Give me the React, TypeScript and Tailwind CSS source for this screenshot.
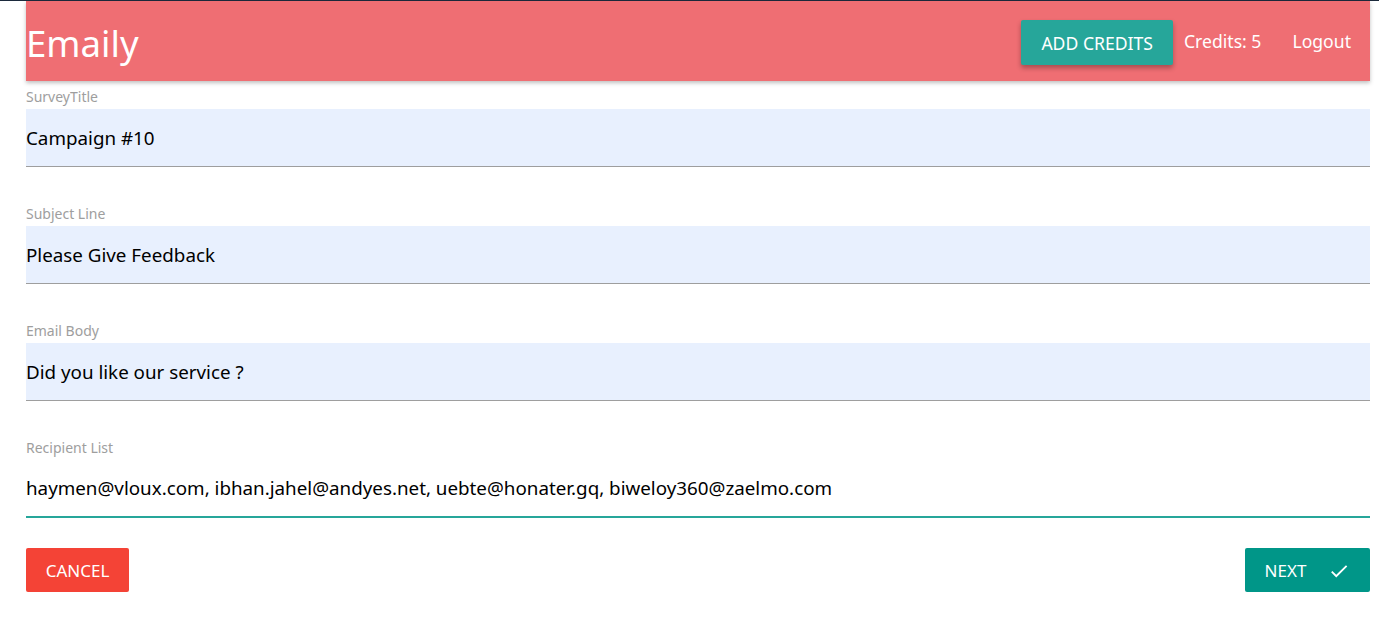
import React, { useState } from 'react';
import { MdDone } from 'react-icons/md';

// Campos do formulário de pesquisa
const fields = [
  { name: 'title', label: 'SurveyTitle', value: 'Campaign #10' },
  { name: 'subject', label: 'Subject Line', value: 'Please Give Feedback' },
  { name: 'body', label: 'Email Body', value: 'Did you like our service ?' },
];

export default function App() {
  const [recipients, setRecipients] = useState(
    'haymen@vloux.com, ibhan.jahel@andyes.net, uebte@honater.gq, biweloy360@zaelmo.com'
  );

  return (
    <div className="min-h-[629px] bg-white" style={{ fontFamily: '"Noto Sans", "Open Sans", sans-serif' }}>
      <div className="h-px bg-[#1c2a3c]" />
      <div className="ml-[26px] w-[1344px]">
        {/* Navbar */}
        <nav className="flex h-[80px] items-center justify-between bg-[#ef6e73] shadow-[0_2px_4px_rgba(0,0,0,0.25)]">
          <a className="mt-[4px] text-[36.6px] leading-none text-white" href="#">
            Emaily
          </a>
          <ul className="flex items-center">
            <li>
              <button className="mt-[3px] h-[45px] rounded-[2px] bg-[#26a69a] px-[20px] pt-[2px] text-[17.6px] text-white shadow-[0_3px_5px_rgba(0,0,0,0.3)]">
                ADD CREDITS
              </button>
            </li>
            <li className="ml-[11px] mt-[1px] text-[17.6px] text-white">Credits: 5</li>
            <li className="ml-[31px] mr-[19px] mt-[1px] text-[17.6px] text-white">Logout</li>
          </ul>
        </nav>

        {/* Formulário */}
        <form className="pt-[6px]" onSubmit={(e) => e.preventDefault()}>
          {fields.map((f) => (
            <div key={f.name} className="mb-[37px]">
              <label className="mb-[3px] block text-[14px] leading-[19px] text-[#9e9e9e]">{f.label}</label>
              <input
                className="block h-[58px] w-full border-b border-[#9e9e9e] bg-[#e8f0fe] text-[18.8px] text-black outline-none"
                defaultValue={f.value}
              />
            </div>
          ))}
          <div>
            <label className="mb-[3px] block text-[14px] leading-[19px] text-[#9e9e9e]">Recipient List</label>
            <input
              className="block h-[58px] w-full border-b-2 border-[#26a69a] bg-white text-[18.8px] text-black outline-none"
              value={recipients}
              onChange={(e) => setRecipients(e.target.value)}
            />
          </div>

          <div className="mt-[30px] flex items-center justify-between">
            <button className="h-[44px] w-[103px] rounded-[2px] bg-[#f44336] pt-[2px] text-[17px] text-white">
              CANCEL
            </button>
            <button className="flex h-[44px] w-[125px] items-center justify-center rounded-[2px] bg-[#009688] pt-[2px] text-[17px] text-white">
              <span>NEXT</span>
              <MdDone className="ml-[22px]" size={22} />
            </button>
          </div>
        </form>
      </div>
    </div>
  );
}
